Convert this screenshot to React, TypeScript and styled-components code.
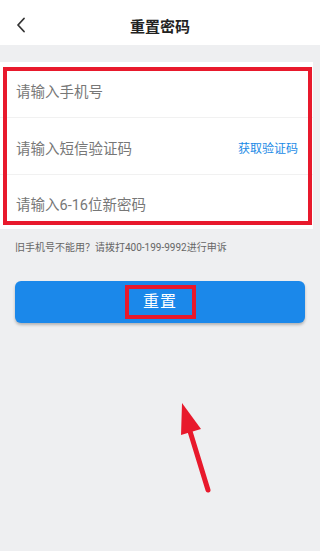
import styled, { createGlobalStyle } from "styled-components";

const GlobalStyle = createGlobalStyle`
  html, body {
    margin: 0;
    padding: 0;
    background: #eeeff1;
  }
  body {
    font-family: Roboto, "Noto Sans CJK SC", "Noto Sans", sans-serif;
  }
`;

const fields = [
  { placeholder: "请输入手机号", height: 56 },
  { placeholder: "请输入短信验证码", height: 57, action: "获取验证码" },
  { placeholder: "请输入6-16位新密码", height: 54 },
];

const App = () => {
  return (
    <Page>
      <GlobalStyle />
      <Header>
        <BackButton>
          <svg width="10" height="16" viewBox="0 0 10 16">
            <path d="M8 1.5 L2 8 L8 14.5" fill="none" stroke="#333" strokeWidth="1.8" strokeLinecap="round" strokeLinejoin="round" />
          </svg>
        </BackButton>
        <Title>重置密码</Title>
        <span />
      </Header>
      <Gap />
      <Card>
        {fields.map((f, i) => (
          <FieldRow key={f.placeholder} $h={f.height} $last={i === fields.length - 1}>
            <Placeholder>{f.placeholder}</Placeholder>
            {f.action && <CodeLink>{f.action}</CodeLink>}
          </FieldRow>
        ))}
        <Highlight />
      </Card>
      <Hint>旧手机号不能用？请拨打400-199-9992进行申诉</Hint>
      <ResetButton>
        <Marked>重置</Marked>
      </ResetButton>
      <Arrow width="320" height="551" viewBox="0 0 320 551">
        <line x1="208" y1="490" x2="189" y2="428" stroke="#e8192c" strokeWidth="5" strokeLinecap="round" />
        <polygon points="182,403 181,435 201,429" fill="#e8192c" />
      </Arrow>
    </Page>
  );
};

const Page = styled.div`
  position: relative;
  width: 320px;
  height: 551px;
  background: #eeeff1;
  overflow: hidden;
`;

const Header = styled.div`
  height: 45px;
  background: #fff;
  display: grid;
  grid-template-columns: 45px 1fr 45px;
  align-items: center;
`;

const BackButton = styled.div`
  display: flex;
  align-items: center;
  padding: 5px 0 0 16px;
  height: 100%;
  box-sizing: border-box;
`;

const Title = styled.div`
  text-align: center;
  font-size: 15px;
  font-weight: 700;
  color: #222;
  padding-top: 5px;
`;

const Gap = styled.div`
  height: 17px;
`;

const Card = styled.div`
  position: relative;
  width: 313px;
  background: #fff;
`;

const FieldRow = styled.div<{ $h: number; $last: boolean }>`
  height: ${(p) => p.$h}px;
  display: flex;
  align-items: center;
  justify-content: space-between;
  padding: 0 15px 0 16px;
  box-sizing: border-box;
  border-bottom: ${(p) => (p.$last ? "none" : "1px solid #f1f1f1")};
`;

const Placeholder = styled.span`
  font-size: 14.5px;
  color: #777;
  padding-top: 2px;
`;

const CodeLink = styled.span`
  font-size: 12px;
  color: #1a8ae6;
  padding-top: 2px;
`;

const Highlight = styled.div`
  position: absolute;
  left: 3px;
  top: 5px;
  width: 309px;
  height: 158px;
  border: 4px solid #e8192c;
  box-sizing: border-box;
  pointer-events: none;
`;

const Hint = styled.div`
  padding: 12px 15px 0;
  font-size: 10px;
  line-height: 14px;
  color: #666;
`;

const ResetButton = styled.div`
  margin: 26px 15px 0;
  height: 42px;
  border-radius: 6px;
  background: #1b88ea;
  box-shadow: 0 2px 3px rgba(0, 0, 0, 0.25);
  display: flex;
  align-items: center;
  justify-content: center;
`;

const Marked = styled.span`
  display: inline-block;
  border: 4px solid #e8192c;
  width: 71px;
  height: 34px;
  box-sizing: border-box;
  text-align: center;
  line-height: 26px;
  font-size: 16px;
  color: #fff;
  letter-spacing: 1px;
`;

const Arrow = styled.svg`
  position: absolute;
  left: 0;
  top: 0;
  pointer-events: none;
`;

export default App;
